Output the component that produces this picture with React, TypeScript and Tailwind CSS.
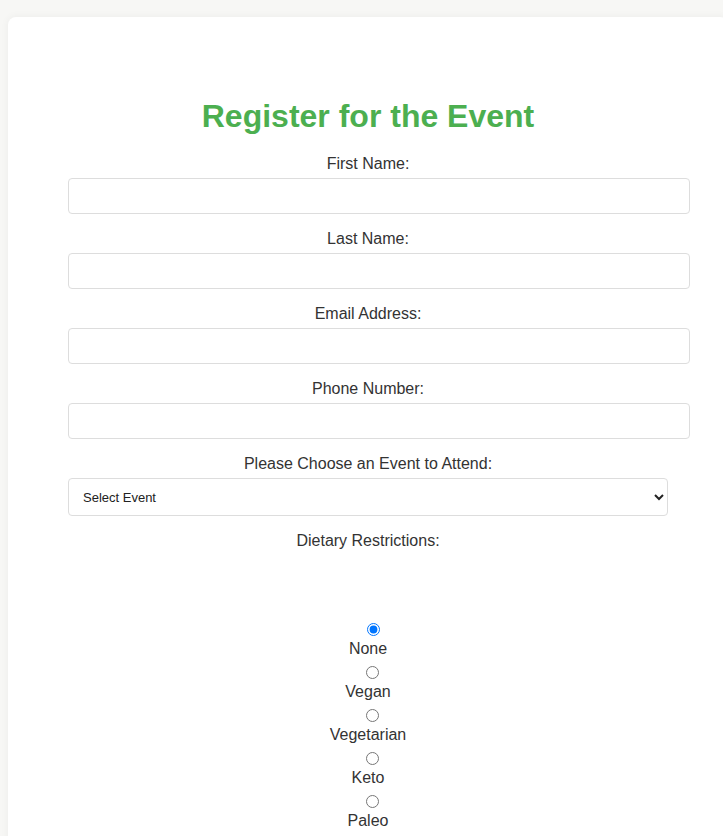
import React, { useState } from "react";

const fields = ["First Name:", "Last Name:", "Email Address:", "Phone Number:"];
const diets = ["None", "Vegan", "Vegetarian", "Keto", "Paleo"];

const App = () => {
  const [diet, setDiet] = useState("None");

  return (
    <div className="h-screen overflow-hidden bg-[#f7f7f5] pl-[8px] pt-[17px] font-['Liberation_Sans',Arial,sans-serif] text-[#333]">
      {/* Card */}
      <div className="w-[720px] rounded-lg bg-white px-[60px] pt-[81px] pb-10 shadow-[0_0_8px_rgba(0,0,0,0.05)]">
        <h1 className="text-center text-[32px] font-bold leading-[37px] text-[#4caf50]">
          Register for the Event
        </h1>

        <form className="mt-[20px] w-[600px]">
          {fields.map((f) => (
            <div key={f}>
              <label className="mb-[5px] block text-center text-[16px] leading-[18px]">
                {f}
              </label>
              <input
                type="text"
                className="mb-[16px] block h-[36px] w-[622px] rounded-[4px] border border-[#ddd] px-[10px] text-[14px] outline-none"
              />
            </div>
          ))}

          <label className="mb-[5px] block text-center text-[16px] leading-[18px]">
            Please Choose an Event to Attend:
          </label>
          <select className="mb-[16px] block h-[38px] w-[600px] rounded-[4px] border border-[#ddd] pl-[10px] pr-2 text-[13px] text-[#222]">
            <option>Select Event</option>
          </select>

          <label className="block text-center text-[16px] leading-[18px]">
            Dietary Restrictions:
          </label>

          {/* Radio options */}
          <div className="mt-[73px] flex flex-col items-center">
            {diets.map((d) => (
              <div key={d} className="mb-[8.5px] flex flex-col items-center">
                <input
                  type="radio"
                  name="diet"
                  checked={diet === d}
                  onChange={() => setDiet(d)}
                  className="m-0 ml-[10px] h-[13px] w-[13px]"
                />
                <span className="mt-[3.5px] text-[16px] leading-[18px]">{d}</span>
              </div>
            ))}
          </div>
        </form>
      </div>
    </div>
  );
};

export default App;
